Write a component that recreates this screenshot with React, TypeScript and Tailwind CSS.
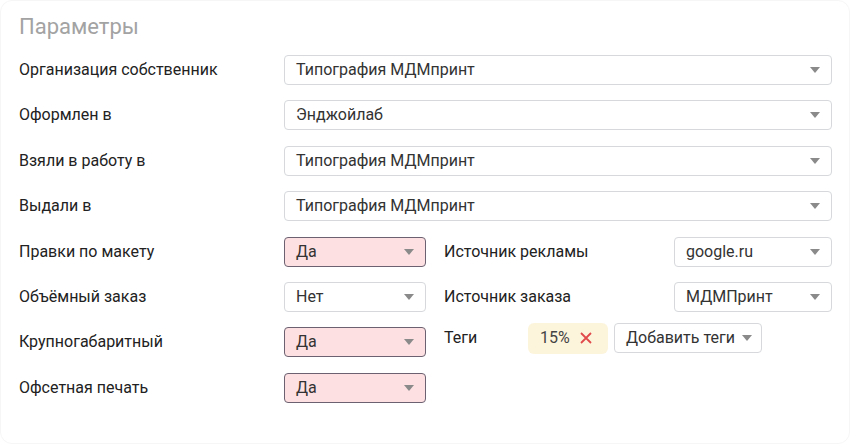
const Arrow = () => (
  <svg width="10" height="6" viewBox="0 0 10 6" className="shrink-0">
    <path d="M0 0 L10 0 L5 6 Z" fill="#8a8a8a" />
  </svg>
);

function Select({ value, width, danger }: { value: string; width?: string; danger?: boolean }) {
  return (
    <div
      className={`flex h-[30px] items-center justify-between rounded-[4px] border pl-[11px] pr-[11px] text-[16px] text-[#333] ${width ?? 'flex-1'} ${
        danger ? 'border-[#6b6170] bg-[#fde1e2]' : 'border-[#d6d8dc] bg-white'
      }`}
    >
      <span>{value}</span>
      <Arrow />
    </div>
  );
}

function Row({ label, children }: { label: string; children: React.ReactNode }) {
  return (
    <div className="flex h-[30px] items-center">
      <div className="w-[265px] shrink-0 text-[16px] text-[#222]">{label}</div>
      {children}
    </div>
  );
}

export default function App() {
  return (
    <div className="h-[444px] w-[850px] bg-white" style={{ fontFamily: 'Roboto, "Noto Sans", sans-serif' }}>
      <div className="h-full rounded-[12px] border border-[#f6f6f6] pl-[18px] pr-[17px] pt-[13px]">
        <h2 className="text-[22px] leading-[26px] text-[#a3a3a3]">Параметры</h2>
        <div className="mt-[15px] flex flex-col gap-[15.4px]">
          <Row label="Организация собственник">
            <Select value="Типография МДМпринт" />
          </Row>
          <Row label="Оформлен в">
            <Select value="Энджойлаб" />
          </Row>
          <Row label="Взяли в работу в">
            <Select value="Типография МДМпринт" />
          </Row>
          <Row label="Выдали в">
            <Select value="Типография МДМпринт" />
          </Row>
          <div className="flex h-[30px] items-center">
            <Row label="Правки по макету">
              <Select value="Да" width="w-[142px]" danger />
            </Row>
            <div className="ml-[18px] w-[230px] text-[16px] text-[#222]">Источник рекламы</div>
            <Select value="google.ru" width="w-[158px]" />
          </div>
          <div className="flex h-[30px] items-center">
            <Row label="Объёмный заказ">
              <Select value="Нет" width="w-[142px]" />
            </Row>
            <div className="ml-[18px] w-[230px] text-[16px] text-[#222]">Источник заказа</div>
            <Select value="МДМПринт" width="w-[158px]" />
          </div>
          <div className="flex h-[30px] items-center">
            <Row label="Крупногабаритный">
              <Select value="Да" width="w-[142px]" danger />
            </Row>
            <div className="ml-[18px] flex items-center -translate-y-[4px]">
              <div className="w-[84px] text-[16px] text-[#222]">Теги</div>
              <div className="flex h-[31px] w-[80px] items-center rounded-[6px] bg-[#fdf4dc] pl-[12px] text-[16px] text-[#444]">
                <span>15%</span>
                <svg width="12" height="12" viewBox="0 0 12 12" className="ml-[10px]">
                  <path d="M1 1 L11 11 M11 1 L1 11" stroke="#e04a4a" strokeWidth="1.8" />
                </svg>
              </div>
              <div className="ml-[6px] flex h-[30px] items-center gap-[7px] rounded-[4px] border border-[#d6d8dc] pl-[11px] pr-[9px] text-[16px] text-[#333]">
                <span>Добавить теги</span>
                <Arrow />
              </div>
            </div>
          </div>
          <Row label="Офсетная печать">
            <Select value="Да" width="w-[142px]" danger />
          </Row>
        </div>
      </div>
    </div>
  );
}
